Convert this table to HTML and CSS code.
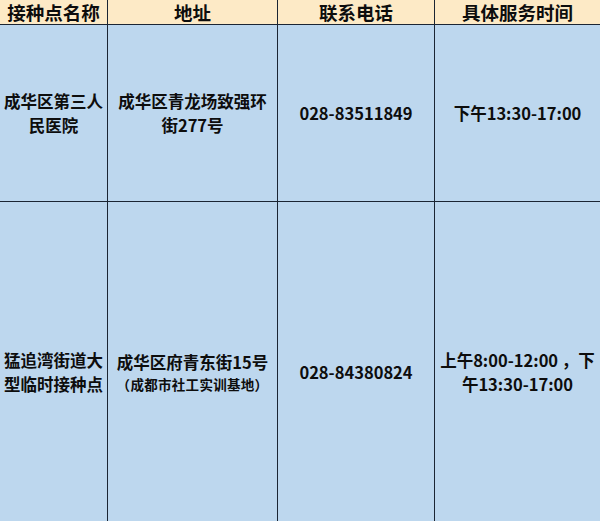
FILE: index.html
```html
<!DOCTYPE html>
<html lang="zh-CN">
<head>
<meta charset="utf-8">
<link rel="stylesheet" href="styles.css">
</head>
<body>
<div class="sheet">
  <div class="cell head">接种点名称</div>
  <div class="cell head">地址</div>
  <div class="cell head">联系电话</div>
  <div class="cell head">具体服务时间</div>

  <div class="cell row1">成华区第三人<br>民医院</div>
  <div class="cell row1">成华区青龙场致强环<br>街277号</div>
  <div class="cell row1">028-83511849</div>
  <div class="cell row1">下午13:30-17:00</div>

  <div class="cell row2">猛追湾街道大<br>型临时接种点</div>
  <div class="cell row2">成华区府青东街15号<br><span class="note">（成都市社工实训基地）</span></div>
  <div class="cell row2">028-84380824</div>
  <div class="cell row2">上午8:00-12:00 ，下<br>午13:30-17:00</div>
</div>
</body>
</html>
```
FILE: styles.css
```css
html, body {
  margin: 0;
  padding: 0;
  background: #bdd7ee;
  overflow: hidden;
}
.sheet {
  display: grid;
  grid-template-columns: 107px 169px 156px 1fr;
  grid-template-rows: 24px 176px 340px;
  gap: 1px;
  background: #1b2533;
  width: 600px;
  font-family: "Noto Sans CJK SC", "Noto Sans", sans-serif;
  font-weight: 700;
  color: #0d0d0d;
}
.cell {
  background: #bdd7ee;
  display: flex;
  align-items: center;
  justify-content: center;
  flex-direction: column;
  text-align: center;
  font-size: 16.5px;
  line-height: 24px;
}
.head {
  background: #fdeac6;
  font-size: 18.5px;
  line-height: 24px;
}
.note {
  font-size: 13.5px;
  line-height: 20px;
  letter-spacing: 0.3px;
  font-weight: 700;
}
```
